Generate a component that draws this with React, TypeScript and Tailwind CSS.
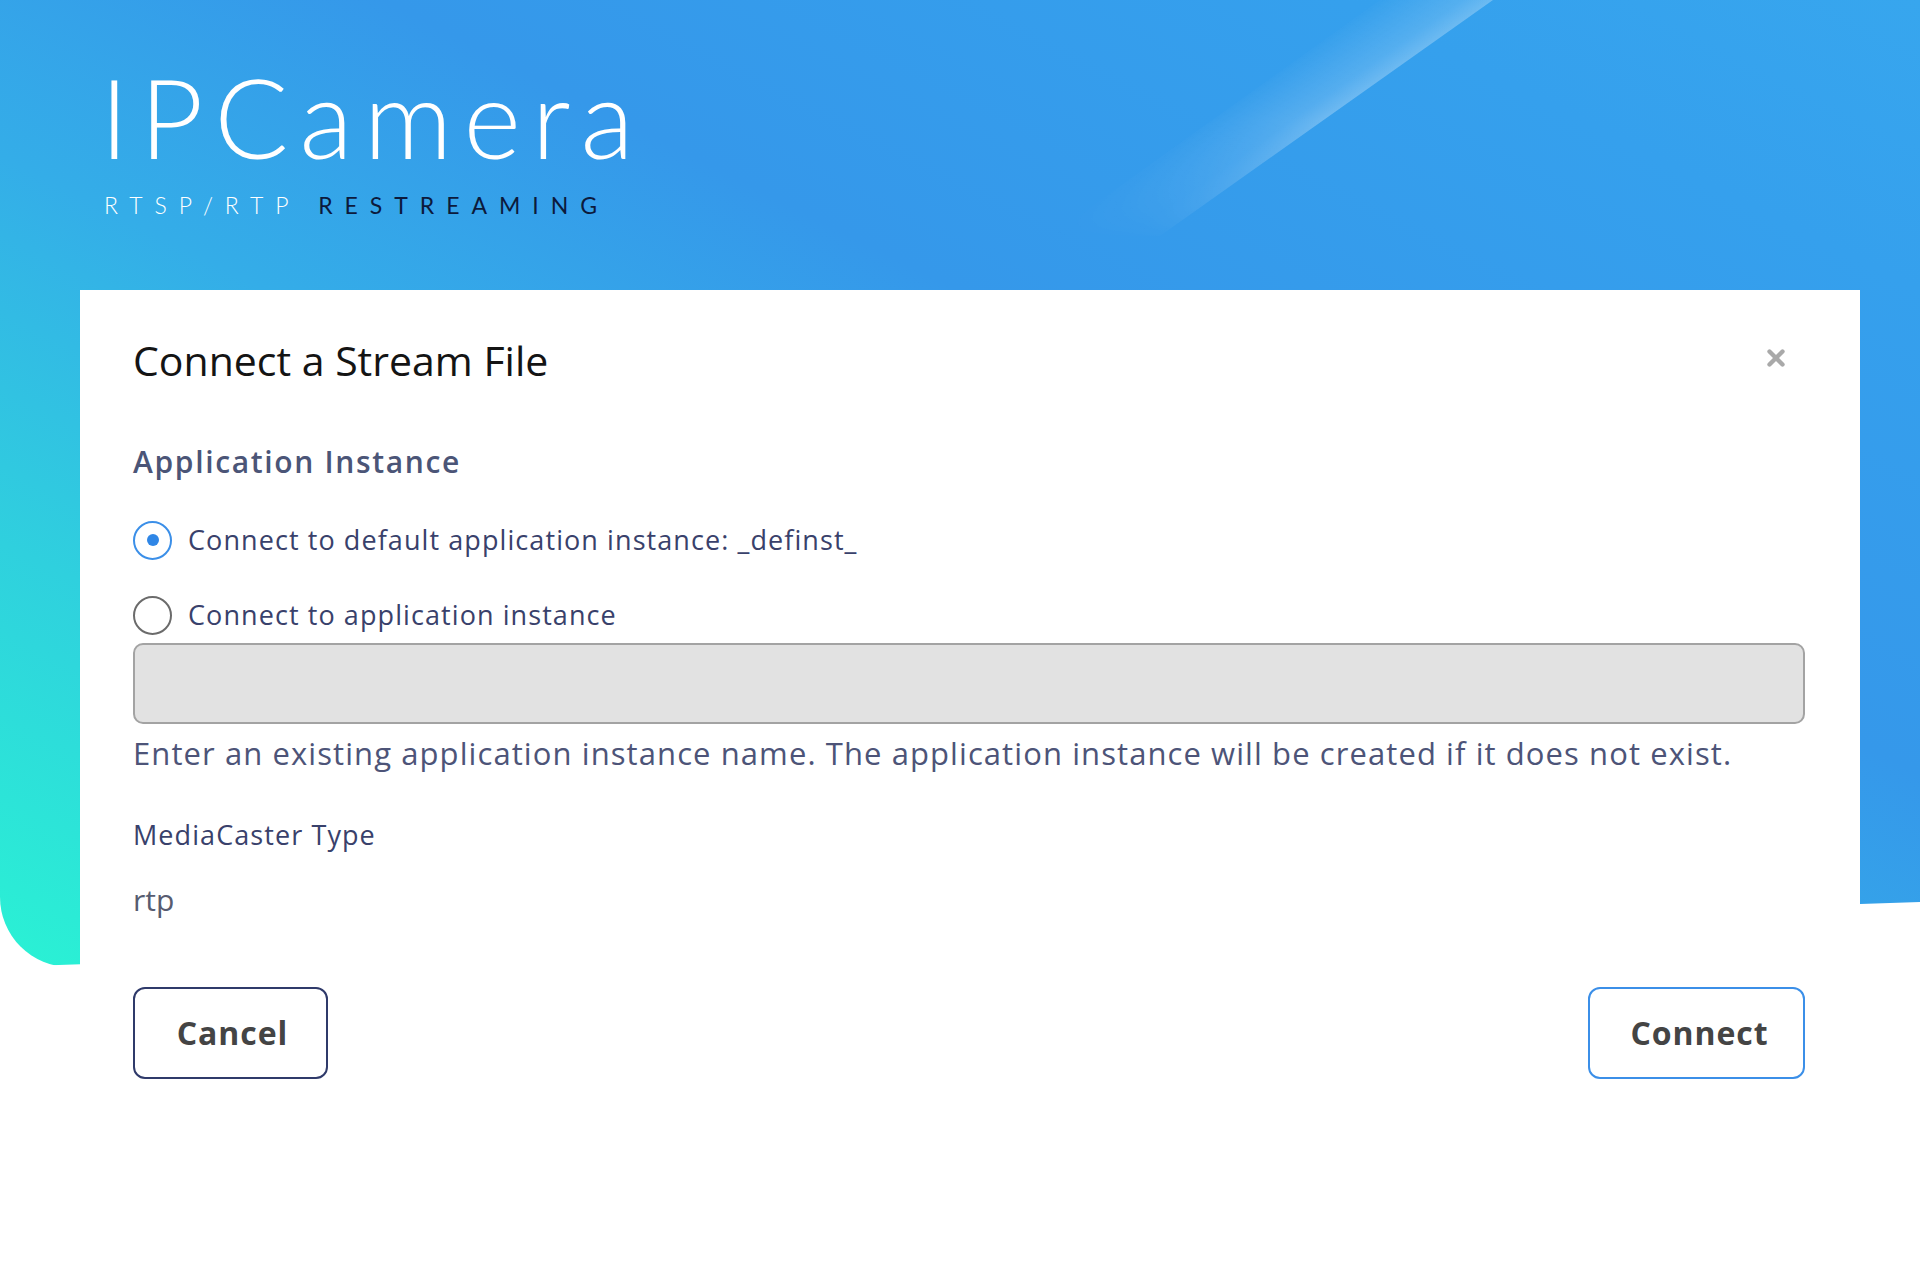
import { X } from 'lucide-react'

const sans = "font-['Open_Sans',_'Noto_Sans',_sans-serif]"

function Radio({ checked }: { checked?: boolean }) {
  return checked ? (
    <span className="flex h-[39px] w-[39px] shrink-0 items-center justify-center rounded-full border-2 border-[#3b8fe8] bg-white">
      <span className="h-[12px] w-[12px] rounded-full bg-[#2f86e6]" />
    </span>
  ) : (
    <span className="h-[39px] w-[39px] shrink-0 rounded-full border-2 border-[#6b6b6b] bg-white" />
  )
}

export default function App() {
  return (
    <div className={`relative h-[1280px] w-[1920px] overflow-hidden bg-white ${sans}`}>
      {/* background blob */}
      <div className="absolute left-0 top-0 h-[967px] w-[1920px] rounded-bl-[70px] bg-[linear-gradient(to_top_right,#2af2d4_0%,#2fd0de_22%,#34ade8_42%,#3598ea_60%,#35a0ed_85%,#37a6ee_100%)] [clip-path:polygon(0_0,100%_0,100%_902px,0_100%)]">
        <svg className="absolute left-0 top-0" width="1920" height="300" viewBox="0 0 1920 300">
          <defs>
            <linearGradient id="streak" gradientUnits="userSpaceOnUse" x1="1327" y1="117" x2="1287" y2="60">
              <stop offset="0" stopColor="#ffffff" stopOpacity="0.28" />
              <stop offset="0.25" stopColor="#ffffff" stopOpacity="0.16" />
              <stop offset="1" stopColor="#ffffff" stopOpacity="0" />
            </linearGradient>
            <linearGradient id="fade" x1="0" y1="0" x2="0" y2="1">
              <stop offset="0" stopColor="#fff" />
              <stop offset="0.5" stopColor="#fff" />
              <stop offset="1" stopColor="#000" />
            </linearGradient>
            <mask id="fadeMask">
              <rect x="0" y="0" width="1920" height="240" fill="url(#fade)" />
            </mask>
          </defs>
          <polygon points="1493,0 1160,236 1050,236 1380,0" fill="url(#streak)" mask="url(#fadeMask)" />
        </svg>
      </div>

      <div className="relative">
        {/* brand header */}
        <header className="h-[290px] pl-[100px] pt-[61px] font-['Lato',_sans-serif]">
          <h1 className="text-[110px] font-light leading-none tracking-[0.1em] text-white">IPCamera</h1>
          <p className="mt-[23px] text-[23px] font-light leading-none tracking-[0.52em] pl-[4px]">
            <span className="text-white">RTSP/RTP</span>{' '}
            <span className="font-normal text-[#0c1a3c]">RESTREAMING</span>
          </p>
        </header>

        {/* dialog */}
        <section className="ml-[80px] h-[990px] w-[1780px] bg-white pl-[53px] pr-[55px] pt-[50px]">
          <div className="flex h-[40px] items-center justify-between">
            <h2 className="text-[41px] leading-[40px] text-[#141414]">Connect a Stream File</h2>
            <button className="mb-[4px] mr-[16px] text-[#a9a9a9]" aria-label="Close">
              <X className="h-[26px] w-[26px]" strokeWidth={4} />
            </button>
          </div>

          <h3 className="mt-[64px] text-[30px] font-semibold leading-[36px] tracking-[0.055em] text-[#4b5577]">
            Application Instance
          </h3>

          <label className="mt-[40px] flex h-[40px] items-center gap-[16px] text-[27px] tracking-[0.04em] text-[#39416b]">
            <Radio checked />
            Connect to default application instance: _definst_
          </label>
          <label className="mt-[35px] flex h-[40px] items-center gap-[16px] text-[27px] tracking-[0.04em] text-[#39416b]">
            <Radio />
            Connect to application instance
          </label>

          <input
            type="text"
            className="mt-[8px] block h-[81px] w-full rounded-[10px] border-2 border-[#a3a3a3] bg-[#e2e2e2] px-4 text-[25px] outline-none"
          />
          <p className="mt-[9px] text-[31px] leading-[40px] tracking-[0.035em] text-[#4d5478]">
            Enter an existing application instance name. The application instance will be created if it does not exist.
          </p>

          <p className="mt-[45px] text-[27px] leading-[34px] tracking-[0.04em] text-[#39416b]">MediaCaster Type</p>
          <p className="mt-[28px] text-[30px] leading-[40px] text-[#575c70]">rtp</p>

          <div className="mt-[67px] flex items-center justify-between">
            <button className="h-[92px] w-[195px] rounded-[12px] border-2 border-[#2f3a6a] pl-[4px] text-[32px] font-bold tracking-[0.03em] text-[#444444]">
              Cancel
            </button>
            <button className="h-[92px] w-[217px] rounded-[12px] border-2 border-[#3b8fe8] pl-[6px] text-[32px] font-bold tracking-[0.03em] text-[#444444]">
              Connect
            </button>
          </div>
        </section>
      </div>
    </div>
  )
}
